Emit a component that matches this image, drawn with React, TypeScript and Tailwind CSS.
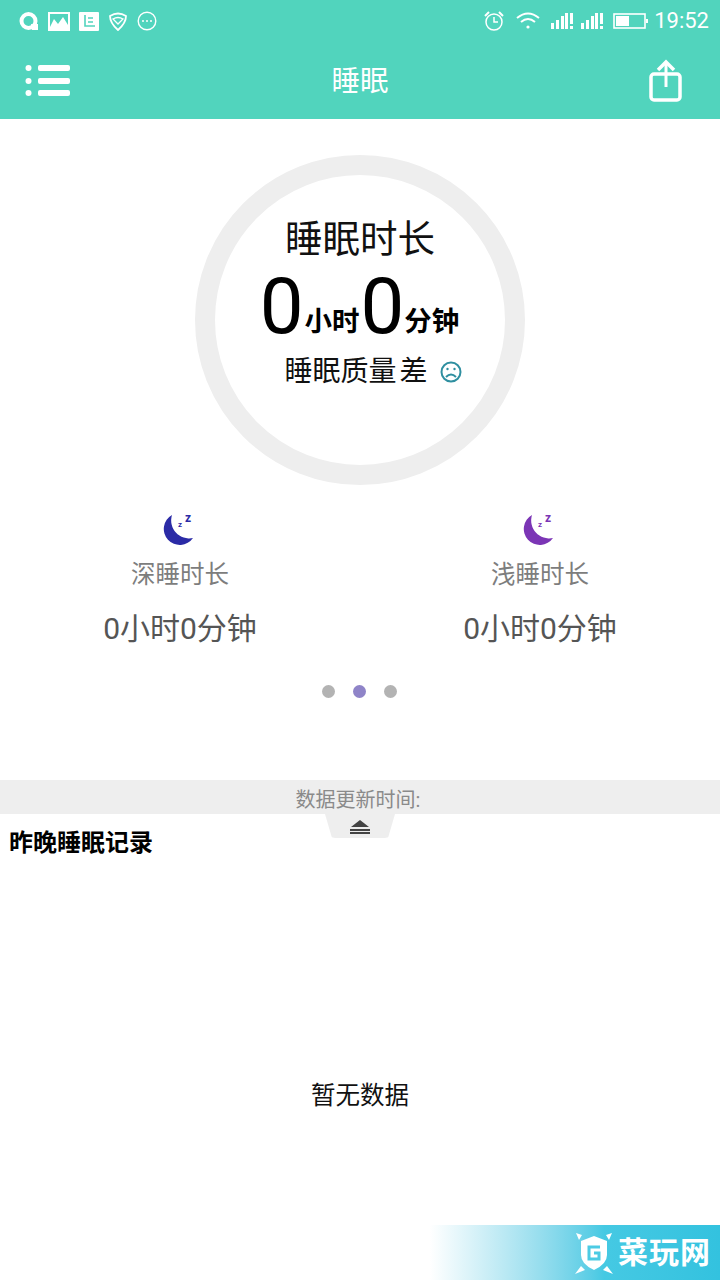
import React from 'react';

const cjk = { fontFamily: 'Roboto, "Noto Sans CJK SC", sans-serif' };

function StatusBar() {
  return (
    <div className="flex h-[42px] items-center justify-between pl-[19px] pr-[11px] text-white">
      <div className="flex items-center gap-[9px]">
        <svg width="20" height="20" viewBox="0 0 20 20" fill="none">
          <circle cx="9.5" cy="10" r="7" stroke="white" strokeWidth="4" />
          <path d="M12 13 L19 13 L19 19 L13 19 Z" fill="white" />
        </svg>
        <svg width="22" height="19" viewBox="0 0 22 19">
          <rect width="22" height="19" fill="white" />
          <rect x="2" y="2" width="18" height="13" fill="#51d4bd" />
          <path d="M2 15 L6 7 L10 12 L15 5 L20 13 L20 17 L2 17 Z" fill="white" />
        </svg>
        <svg width="20" height="19" viewBox="0 0 20 19">
          <rect width="20" height="19" rx="1" fill="white" />
          <path d="M6 3 V14 H16 M9 6 H14 M9 10 H14" stroke="#51d4bd" strokeWidth="1.6" fill="none" />
        </svg>
        <svg width="20" height="20" viewBox="0 0 20 20" fill="none" stroke="white" strokeWidth="1.8">
          <path d="M2 5 Q10 0 18 5 Q18 12 10 19 Q2 12 2 5 Z" />
          <path d="M5 8 Q10 5 15 8 L10 13 Z" strokeWidth="1.4" />
        </svg>
        <svg width="20" height="20" viewBox="0 0 20 20" fill="none">
          <circle cx="10" cy="10" r="8.8" stroke="white" strokeWidth="1.4" />
          <circle cx="6" cy="10" r="1" fill="white" />
          <circle cx="10" cy="10" r="1" fill="white" />
          <circle cx="14" cy="10" r="1" fill="white" />
        </svg>
      </div>
      <div className="flex items-center">
        <svg width="22" height="22" viewBox="0 0 22 22" fill="none" stroke="white" strokeWidth="1.5" className="mr-[10px]">
          <circle cx="11" cy="12" r="8" />
          <path d="M11 7 V12 H15" />
          <path d="M2 6 L6 2 M20 6 L16 2" strokeWidth="2" />
        </svg>
        <svg width="26" height="20" viewBox="0 0 26 20" fill="none" stroke="white" strokeWidth="2" className="mr-[9px]">
          <path d="M2 7 Q13 -2 24 7" />
          <path d="M6 11 Q13 5 20 11" />
          <circle cx="13" cy="16" r="1.6" fill="white" stroke="none" />
        </svg>
        <svg width="24" height="20" viewBox="0 0 24 20" fill="white" className="mr-[6px]">
          <rect x="1" y="12" width="3" height="6" />
          <rect x="6" y="9" width="3" height="9" />
          <rect x="11" y="5" width="3" height="13" />
          <rect x="15" y="2" width="3" height="16" />
          <rect x="20" y="2" width="3" height="11" />
          <rect x="20" y="15" width="3" height="3" />
        </svg>
        <svg width="24" height="20" viewBox="0 0 24 20" fill="white" className="mr-[9px]">
          <rect x="1" y="12" width="3" height="6" />
          <rect x="6" y="9" width="3" height="9" />
          <rect x="11" y="5" width="3" height="13" />
          <rect x="15" y="2" width="3" height="16" />
          <rect x="20" y="2" width="3" height="11" />
          <rect x="20" y="15" width="3" height="3" />
        </svg>
        <svg width="36" height="18" viewBox="0 0 36 18" className="mr-[5px]">
          <rect x="1" y="2" width="31" height="14" fill="none" stroke="white" strokeWidth="1.6" />
          <rect x="3" y="4" width="13" height="10" fill="white" />
          <rect x="33" y="7" width="2" height="4" fill="white" />
        </svg>
        <span className="text-[22px] leading-none" style={{ fontFamily: 'Roboto, sans-serif' }}>19:52</span>
      </div>
    </div>
  );
}

function Moon({ color }: { color: string }) {
  return (
    <svg width="34" height="36" viewBox="0 0 34 36">
      <path d="M9 4 A16 16 0 1 0 30 27 A18 18 0 0 1 9 4 Z" fill={color} />
      <text x="15" y="16" fontSize="8" fontWeight="700" fill={color} fontFamily="Roboto, sans-serif">z</text>
      <text x="22" y="11" fontSize="12" fontWeight="700" fill={color} fontFamily="Roboto, sans-serif">z</text>
    </svg>
  );
}

function Stat({ label, color }: { label: string; color: string }) {
  return (
    <div className="flex flex-1 flex-col items-center">
      <Moon color={color} />
      <div className="mt-[10px] text-[24.5px] leading-[36px] text-[#7d7d7d]">{label}</div>
      <div className="mt-[17px] text-[30px] leading-[38px] text-[#555555]">0小时0分钟</div>
    </div>
  );
}

export default function App() {
  return (
    <div className="relative h-[1280px] w-[720px] overflow-hidden bg-white" style={cjk}>
      <div className="h-[119px] bg-[#51d4bd]">
        <StatusBar />
        <div className="flex h-[78px] items-center justify-between pl-[25px] pr-[37px] text-white">
          <svg width="46" height="34" viewBox="0 0 46 34" fill="white">
            <circle cx="3.5" cy="4" r="3" />
            <circle cx="3.5" cy="17" r="3" />
            <circle cx="3.5" cy="29" r="3" />
            <rect x="13" y="1" width="32" height="6" rx="2" />
            <rect x="13" y="14" width="32" height="6" rx="2" />
            <rect x="13" y="26" width="32" height="6" rx="2" />
          </svg>
          <span className="pt-[2px] text-[28.5px]">睡眠</span>
          <svg width="34" height="44" viewBox="0 0 34 44" fill="none" stroke="white" strokeWidth="3.5">
            <rect x="2" y="15" width="29" height="26" rx="3" />
            <path d="M17 28 V3" strokeWidth="3" />
            <path d="M9 11 L17 3 L25 11" strokeWidth="3.5" />
          </svg>
        </div>
      </div>

      <div className="mt-[36px] flex justify-center">
        <div className="flex h-[330px] w-[330px] flex-col items-center rounded-full border-[20px] border-[#eeeeee] pt-[39px]">
          <div className="text-[37.5px] leading-[50px] text-[#111111]">睡眠时长</div>
          <div className="mt-[7px] flex h-[72px] items-end pr-[1px] leading-none text-black">
            <span className="text-[78px] leading-[72px]">0</span>
            <span className="ml-[1px] mb-[3px] text-[27.5px] font-bold leading-[36px]">小时</span>
            <span className="ml-[1px] text-[78px] leading-[72px]">0</span>
            <span className="mb-[3px] text-[27.5px] font-bold leading-[36px]">分钟</span>
          </div>
          <div className="ml-[26px] mt-[9px] flex items-center text-[28px] leading-[40px] text-[#111111]">
            <span>睡眠质量</span>
            <span className="ml-[3px]">差</span>
            <svg width="22" height="22" viewBox="0 0 22 22" fill="none" stroke="#2f8fa0" strokeWidth="2" className="ml-[12px]">
              <circle cx="11" cy="11" r="9.5" />
              <path d="M6 16 Q11 11 16 16" />
              <circle cx="7.5" cy="8" r="1.2" fill="#2f8fa0" stroke="none" />
              <circle cx="14.5" cy="8" r="1.2" fill="#2f8fa0" stroke="none" />
            </svg>
          </div>
        </div>
      </div>

      <div className="mt-[26px] flex">
        <Stat label="深睡时长" color="#2b2ba6" />
        <Stat label="浅睡时长" color="#7b35b5" />
      </div>

      <div className="mt-[37px] flex justify-center gap-[18px] pr-[2px]">
        <span className="h-[13px] w-[13px] rounded-full bg-[#b3b3b3]" />
        <span className="h-[13px] w-[13px] rounded-full bg-[#8f84c8]" />
        <span className="h-[13px] w-[13px] rounded-full bg-[#b3b3b3]" />
      </div>

      <div className="mt-[82px] h-[34px] bg-[#eeeeee] pr-[4px] text-center text-[20px] leading-[40px] text-[#8a8a8a]">
        数据更新时间:
      </div>

      <div className="relative">
        <div className="absolute left-[325px] top-0 flex h-[24px] w-[70px] justify-center rounded-b-[10px] bg-[#eeeeee] pt-[5px] [clip-path:polygon(0_0,100%_0,90%_100%,10%_100%)]">
          <svg width="22" height="16" viewBox="0 0 22 16" fill="#444444">
            <path d="M11 1 L20 8 H2 Z" />
            <rect x="1" y="10" width="20" height="2" />
            <rect x="1" y="13" width="20" height="2" />
          </svg>
        </div>
        <div className="pl-[9px] pt-[12px] text-[24px] font-bold leading-[34px] text-black">昨晚睡眠记录</div>
      </div>

      <div className="mt-[218px] text-center text-[24.5px] leading-[36px] text-[#111111]">暂无数据</div>

      <div className="absolute bottom-0 right-0 flex h-[55px] w-[290px] items-center justify-end bg-gradient-to-r from-white via-[#45c9e3] via-60% to-[#33c2df] pr-[9px] text-white">
        <svg width="42" height="46" viewBox="0 0 42 46" className="mr-[3px]">
          <path d="M21 6 L34 11 V25 Q34 34 21 40 Q8 34 8 25 V11 Z" fill="white" />
          <path d="M27 17 H16 V29 H26 V23 H21" fill="none" stroke="#4ccbe4" strokeWidth="3" />
          <path d="M3 3 L9 5 L6 10 Z M39 3 L33 5 L36 10 Z M2 44 L8 36 L12 40 Z M40 44 L34 36 L30 40 Z" fill="white" />
        </svg>
        <span className="text-[30px] font-bold leading-none tracking-[1px]">菜玩网</span>
      </div>
    </div>
  );
}
